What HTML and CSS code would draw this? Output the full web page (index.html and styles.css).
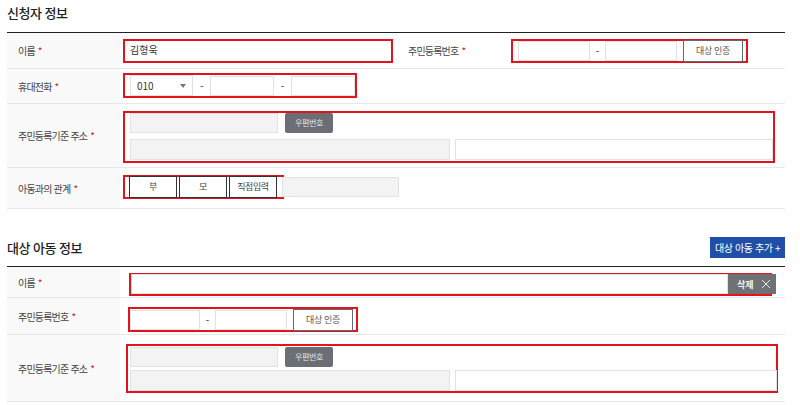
FILE: index.html
```html
<!DOCTYPE html>
<html lang="ko">
<head>
    <meta charset="UTF-8">
    <meta name="viewport" content="width=device-width, initial-scale=1.0">
    <title>신청자 정보</title>
    <link rel="stylesheet" href="styles.css">
</head>
<body>
    <div class="section">
        <div class="section-head first">
            <h2 class="section-title">신청자 정보</h2>
        </div>
        <div class="form-table">
            <div class="form-row row-name">
                <div class="label">이름 <span class="req">*</span></div>
                <div class="value">
                    <div class="mark mark-name">
                        <input class="plain-input" type="text" value="김형욱">
                    </div>
                </div>
                <div class="label label-inner">주민등록번호 <span class="req">*</span></div>
                <div class="value">
                    <div class="mark mark-rrn">
                        <input class="box-input w72" type="text">
                        <span class="dash">-</span>
                        <input class="box-input w72" type="text">
                        <button class="btn-line">대상 인증</button>
                    </div>
                </div>
            </div>
            <div class="form-row row-phone">
                <div class="label">휴대전화 <span class="req">*</span></div>
                <div class="value">
                    <div class="mark mark-phone">
                        <div class="select-box">010<span class="caret"></span></div>
                        <span class="dash">-</span>
                        <input class="box-input w64" type="text">
                        <span class="dash">-</span>
                        <input class="box-input w64" type="text">
                    </div>
                </div>
            </div>
            <div class="form-row row-addr">
                <div class="label">주민등록기준 주소 <span class="req">*</span></div>
                <div class="value">
                    <div class="mark mark-addr">
                        <div class="addr-line">
                            <input class="box-input gray w148" type="text" disabled>
                            <button class="btn-dark">우편번호</button>
                        </div>
                        <div class="addr-line">
                            <input class="box-input gray w320" type="text" disabled>
                            <input class="box-input grow" type="text">
                        </div>
                    </div>
                </div>
            </div>
            <div class="form-row row-rel">
                <div class="label">아동과의 관계 <span class="req">*</span></div>
                <div class="value">
                    <div class="mark mark-rel">
                        <button class="btn-choice">부</button>
                        <button class="btn-choice">모</button>
                        <button class="btn-choice">직접입력</button>
                    </div>
                    <input class="box-input gray rel-input" type="text" disabled>
                </div>
            </div>
        </div>
    </div>

    <div class="section">
        <div class="section-head second">
            <h2 class="section-title">대상 아동 정보</h2>
            <button class="btn-add">대상 아동 추가 +</button>
        </div>
        <div class="form-table">
            <div class="form-row row-child-name">
                <div class="label">이름 <span class="req">*</span></div>
                <div class="value pad9">
                    <div class="mark mark-child">
                        <input class="box-input grow" type="text">
                        <button class="btn-delete">삭제
                            <svg width="10" height="10" viewBox="0 0 10 10"><path d="M1 1L9 9M9 1L1 9" stroke="#e6e6e6" stroke-width="1" fill="none"/></svg>
                        </button>
                    </div>
                </div>
            </div>
            <div class="form-row row-child-rrn">
                <div class="label">주민등록번호 <span class="req">*</span></div>
                <div class="value pad8">
                    <div class="mark mark-child-rrn">
                        <input class="box-input w70" type="text">
                        <span class="dash">-</span>
                        <input class="box-input w72" type="text">
                        <button class="btn-line">대상 인증</button>
                    </div>
                </div>
            </div>
            <div class="form-row row-child-addr">
                <div class="label">주민등록기준 주소 <span class="req">*</span></div>
                <div class="value pad6">
                    <div class="mark mark-child-addr">
                        <div class="addr-line">
                            <input class="box-input gray w148" type="text" disabled>
                            <button class="btn-dark">우편번호</button>
                        </div>
                        <div class="addr-line">
                            <input class="box-input gray w320" type="text" disabled>
                            <input class="box-input grow" type="text">
                        </div>
                    </div>
                </div>
            </div>
        </div>
    </div>
</body>
</html>
```

FILE: styles.css
```css
body {
    margin: 0;
    padding: 0 15px 0 7px;
    background: #fff;
    color: #333;
    font-family: "Noto Sans CJK KR", "Noto Sans", sans-serif;
    font-size: 10px;
}

input,
button {
    font-family: inherit;
    box-sizing: border-box;
    margin: 0;
}

.section-head {
    display: flex;
    justify-content: space-between;
    align-items: center;
}

.section-head.first {
    height: 32px;
    align-items: flex-start;
}

.section-head.second {
    padding: 28px 0 8px;
}

.section-title {
    margin: 0;
    font-size: 13px;
    font-weight: 500;
    line-height: 18px;
    letter-spacing: -0.5px;
    color: #222;
}

.section-head.first .section-title {
    padding-top: 4px;
}

.btn-add {
    height: 21px;
    width: 75px;
    padding: 0;
    border: none;
    background: #1f4fa6;
    color: #fff;
    font-size: 10px;
    letter-spacing: -0.4px;
}

.form-table {
    border-top: 1px solid #222;
}

.form-row {
    display: grid;
    grid-template-columns: 113px 1fr;
    border-bottom: 1px solid #e6e6e6;
}

.form-row.row-name {
    grid-template-columns: 113px 280px 110px 1fr;
    height: 35px;
}

.row-phone { height: 34px; }
.row-addr { height: 63px; }
.row-rel { height: 40px; }
.row-child-name { height: 30px; }
.row-child-rrn { height: 36px; }
.row-child-addr { height: 66px; }

.label {
    display: flex;
    align-items: center;
    padding-left: 11px;
    background: #f9f9f9;
    color: #444;
    font-size: 10px;
    letter-spacing: -0.8px;
}

.label.label-inner {
    padding-left: 8px;
    background: #fff;
}

.req {
    color: #d0142c;
    margin-left: 3px;
}

.value {
    display: flex;
    align-items: center;
    padding-left: 3px;
}

.value.pad9 { padding-left: 9px; padding-top: 4px; }
.value.pad8 { padding-left: 8px; padding-top: 7px; }
.value.pad6 { padding-left: 6px; }

.mark {
    display: flex;
    align-items: center;
    border: 2px solid #e1131c;
    box-sizing: border-box;
}

.mark-name {
    width: 270px;
    height: 24px;
    padding-left: 5px;
    margin-top: 1px;
}

.plain-input {
    border: none;
    width: 100%;
    height: 18px;
    padding: 0;
    font-size: 10px;
    color: #333;
    background: transparent;
    margin-top: -3px;
}

.mark-rrn {
    width: 237px;
    height: 24px;
    padding-left: 5px;
    margin-left: -2px;
}

.box-input {
    height: 20px;
    border: 1px solid #e2e2e2;
    background: #fff;
    padding: 0 6px;
    font-size: 10px;
}

.box-input.gray {
    background: #f3f3f3;
}

.w64 { width: 64px; }
.w70 { width: 70px; }
.w72 { width: 72px; }
.w148 { width: 148px; }
.w320 { width: 320px; }
.grow { flex: 1; min-width: 0; }

.dash {
    width: 15px;
    text-align: center;
    color: #333;
    font-size: 10px;
}

.btn-line {
    width: 60px;
    height: 22px;
    margin-left: 6px;
    padding: 0;
    border: 1px solid #5d6a7a;
    background: #fff;
    color: #555;
    font-size: 9px;
    letter-spacing: -0.3px;
}

.mark-phone {
    width: 234px;
    height: 25px;
    padding-left: 5px;
    margin-top: -1px;
}

.mark-phone .dash {
    width: 17px;
}

.select-box {
    position: relative;
    width: 64px;
    height: 21px;
    box-sizing: border-box;
    border: 1px solid #e2e2e2;
    padding-left: 6px;
    display: flex;
    align-items: center;
    font-size: 10px;
    color: #333;
}

.caret {
    position: absolute;
    right: 6px;
    top: 8px;
    border-left: 3px solid transparent;
    border-right: 3px solid transparent;
    border-top: 4px solid #777;
}

.mark-addr {
    width: 652px;
    height: 52px;
    flex-direction: column;
    align-items: stretch;
    justify-content: space-between;
    padding: 0 0 1px 5px;
    margin-top: 2px;
}

.addr-line {
    display: flex;
    gap: 5px;
}

.addr-line:first-child {
    gap: 7px;
}

.addr-line:last-child .box-input {
    height: 21px;
}

.btn-dark {
    width: 48px;
    height: 20px;
    padding: 0;
    border: none;
    border-radius: 2px;
    background: #6b6f75;
    color: #e8e8e8;
    font-size: 8px;
    letter-spacing: -0.3px;
}

.mark-rel {
    width: 161px;
    height: 24px;
    padding-left: 4px;
    gap: 2px;
    margin-top: -3px;
}

.btn-choice {
    width: 48px;
    height: 22px;
    padding: 0;
    border: 1px solid #333;
    background: #fff;
    color: #444;
    font-size: 9px;
    letter-spacing: -0.4px;
}

.rel-input {
    width: 117px;
    margin-left: -2px;
    margin-top: -2px;
}

.mark-child {
    width: 643px;
    height: 23px;
    padding-left: 0;
    overflow: visible;
}

.btn-delete {
    display: flex;
    align-items: center;
    justify-content: space-between;
    width: 48px;
    height: 20px;
    margin-right: -6px;
    padding: 0 5px 0 9px;
    border: none;
    background: #6e7275;
    color: #f2f2f2;
    font-size: 9px;
    font-weight: 700;
    position: relative;
}

.mark-child-rrn {
    width: 230px;
    height: 25px;
    padding-left: 0;
}

.mark-child-addr {
    width: 652px;
    height: 49px;
    flex-direction: column;
    align-items: stretch;
    justify-content: space-between;
    padding: 1px 0 0 2px;
}

.mark-child-addr .addr-line:last-child {
    margin-right: -1px;
}
```
